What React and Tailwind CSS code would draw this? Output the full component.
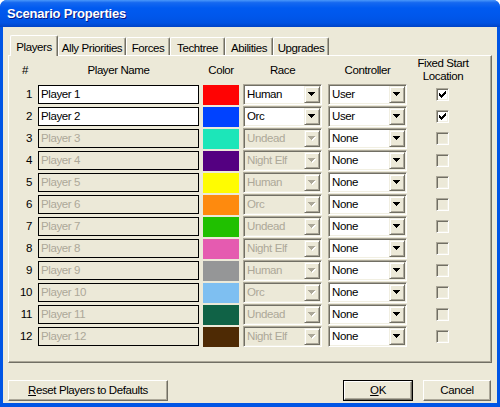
import React from "react";

const PLAYER_COLORS = [
  "#FF0303",
  "#0042FF",
  "#1CE6B9",
  "#540081",
  "#FFFC01",
  "#FE8A0E",
  "#20C000",
  "#E55BB0",
  "#959697",
  "#7EBFF1",
  "#106246",
  "#4E2A04",
];

const RACES = ["Human", "Orc", "Undead", "Night Elf"];

const TABS = [
  { label: "Players", w: "w-[48px]" },
  { label: "Ally Priorities", w: "w-[68px]" },
  { label: "Forces", w: "w-[44px]" },
  { label: "Techtree", w: "w-[55px]" },
  { label: "Abilities", w: "w-[48px]" },
  { label: "Upgrades", w: "w-[56px]" },
];

const players = PLAYER_COLORS.map((color, i) => ({
  id: i + 1,
  name: `Player ${i + 1}`,
  color,
  race: RACES[i % 4],
  controller: i < 2 ? "User" : "None",
  active: i < 2,
}));

const Arrow = ({ disabled }) => (
  <svg width="8" height="5" viewBox="0 0 8 5" className="block">
    {disabled && (
      <path d="M1 1h7v1H1z M2 2h5v1H2z M3 3h3v1H3z M4 4h1v1H4z" fill="#ffffff" />
    )}
    <path
      d="M0 0h7v1H0z M1 1h5v1H1z M2 2h3v1H2z M3 3h1v1H3z"
      fill={disabled ? "#ACA899" : "#000000"}
    />
  </svg>
);

const Combo = ({ value, disabled }) => (
  <div
    className={`w-[79px] h-[21px] flex items-stretch border border-t-[#ACA899] border-l-[#ACA899] border-r-white border-b-white shadow-[inset_1px_1px_0_#716F64,inset_-1px_-1px_0_#F1EFE2] p-[1px] ${
      disabled ? "bg-[#ECE9D8] text-[#ACA899]" : "bg-white text-black"
    }`}
  >
    <div className="flex-1 flex items-center pl-[2px] leading-none">{value}</div>
    <div className="w-[16px] flex items-center justify-center bg-[#ECE9D8] border border-t-[#F1EFE2] border-l-[#F1EFE2] border-r-[#716F64] border-b-[#716F64] shadow-[inset_1px_1px_0_#ffffff,inset_-1px_-1px_0_#ACA899]">
      <Arrow disabled={disabled} />
    </div>
  </div>
);

const CheckBox = ({ checked, disabled }) => (
  <div
    className={`w-[13px] h-[13px] flex items-center justify-center border border-t-[#ACA899] border-l-[#ACA899] border-r-white border-b-white shadow-[inset_1px_1px_0_#716F64,inset_-1px_-1px_0_#F1EFE2] ${
      disabled ? "bg-[#ECE9D8]" : "bg-white"
    }`}
  >
    {checked && (
      <svg width="7" height="7" viewBox="0 0 7 7" className="block">
        <path
          d="M0 2h1v3H0z M1 3h1v3H1z M2 4h1v3H2z M3 3h1v3H3z M4 2h1v3H4z M5 1h1v3H5z M6 0h1v3H6z"
          fill="#000"
        />
      </svg>
    )}
  </div>
);

const Button = ({ children, className = "", isDefault }) => (
  <div
    className={`h-[21px] ${isDefault ? "border border-black" : ""} ${className}`}
  >
    <div className="h-full flex items-center justify-center bg-[#ECE9D8] border border-t-white border-l-white border-r-[#716F64] border-b-[#716F64] shadow-[inset_-1px_-1px_0_#ACA899] text-black">
      {children}
    </div>
  </div>
);

export default function App() {
  return (
    <div className="w-[500px] h-[407px] bg-white font-['Liberation_Sans',Arial,sans-serif] text-[11.5px] tracking-[-0.4px] text-black">
      <div className="w-full h-full flex flex-col rounded-t-[7px] overflow-hidden bg-[#0055E5]">
        {/* Title bar */}
        <div className="h-[27px] shrink-0 flex items-center pl-[7px] bg-[linear-gradient(to_bottom,#4A98FA_0%,#1568F0_10%,#005AF0_30%,#0057EB_60%,#0052E2_85%,#0043C6_100%)]">
          <span className="text-white font-bold text-[13px] tracking-[-0.2px] leading-none [text-shadow:1px_1px_0_#0A1883]">
            Scenario Properties
          </span>
        </div>

        {/* Dialog body */}
        <div className="flex-1 mx-[3px] mb-[4px] bg-[#ECE9D8] flex flex-col pt-[8px]">
          {/* Tabs */}
          <div className="h-[20px] flex items-end pl-[7px]">
            {TABS.map((tab, i) =>
              i === 0 ? (
                <div
                  key={tab.label}
                  className={`${tab.w} h-[21px] -mb-[1px] relative z-10 bg-[#ECE9D8] border-t border-l border-r border-t-white border-l-white border-r-[#716F64] shadow-[inset_-1px_0_0_#ACA899] rounded-tl-[2px] rounded-tr-[2px] flex items-start justify-center pt-[3px]`}
                >
                  {tab.label}
                </div>
              ) : (
                <div
                  key={tab.label}
                  className={`${tab.w} h-[18px] bg-[#ECE9D8] border-t border-l border-r border-t-white border-l-white border-r-[#716F64] shadow-[inset_-1px_0_0_#ACA899] rounded-tl-[2px] rounded-tr-[2px] flex items-start justify-center pt-[2px]`}
                >
                  {tab.label}
                </div>
              )
            )}
          </div>

          {/* Panel */}
          <div className="mx-[5px] h-[308px] border border-t-white border-l-white border-r-[#716F64] border-b-[#716F64] shadow-[inset_-1px_-1px_0_#ACA899] flex flex-col">
            {/* Header */}
            <div className="h-[28px] flex items-center leading-[13px]">
              <div className="w-[23px] text-right pr-[4px]">#</div>
              <div className="ml-[6px] w-[161px] text-center">Player Name</div>
              <div className="ml-[4px] w-[36px] text-center">Color</div>
              <div className="ml-[4px] w-[79px] text-center">Race</div>
              <div className="ml-[6px] w-[79px] text-center">Controller</div>
              <div className="ml-[5px] w-[62px] text-center">
                Fixed Start
                <br />
                Location
              </div>
            </div>

            {/* Rows */}
            <div className="flex flex-col gap-[1px]">
              {players.map((p) => (
                <div key={p.id} className="h-[21px] flex items-center">
                  <div className="w-[23px] text-right">{p.id}</div>
                  <div
                    className={`ml-[6px] w-[161px] h-[19px] border border-black flex items-center pl-[2px] ${
                      p.active ? "bg-white text-black" : "bg-[#ECE9D8] text-[#ACA899]"
                    }`}
                  >
                    {p.name}
                  </div>
                  <div
                    className="ml-[4px] w-[36px] h-[20px]"
                    style={{ backgroundColor: p.color }}
                  />
                  <div className="ml-[4px]">
                    <Combo value={p.race} disabled={!p.active} />
                  </div>
                  <div className="ml-[6px]">
                    <Combo value={p.controller} />
                  </div>
                  <div className="ml-[5px] w-[60px] flex justify-center">
                    <CheckBox checked={p.active} disabled={!p.active} />
                  </div>
                </div>
              ))}
            </div>
          </div>

          {/* Buttons */}
          <div className="mt-[17px] flex items-center pl-[5px]">
            <Button className="w-[160px]">
              <span>
                <span className="underline">R</span>eset Players to Defaults
              </span>
            </Button>
            <Button className="w-[70px] ml-auto" isDefault>
              <span>
                <span className="underline">O</span>K
              </span>
            </Button>
            <Button className="w-[68px] ml-[10px] mr-[6px]">Cancel</Button>
          </div>
        </div>
      </div>
    </div>
  );
}
